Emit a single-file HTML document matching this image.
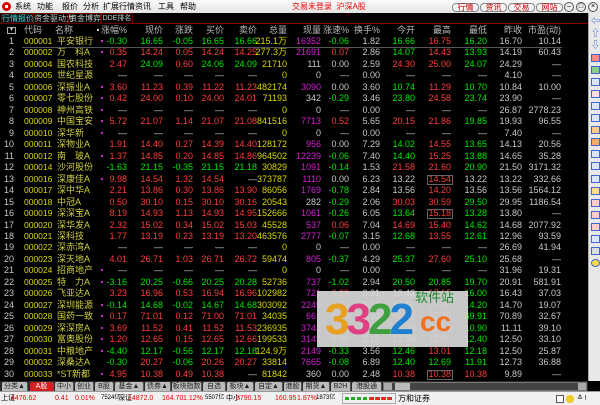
<!DOCTYPE html>
<html><head><meta charset="utf-8">
<style>
*{margin:0;padding:0;box-sizing:border-box}
body{width:600px;height:405px;overflow:hidden;background:#000;font-family:"Liberation Sans","Noto Sans CJK SC",sans-serif;font-size:9px;position:relative}
.a{position:absolute;white-space:nowrap}
#menu{left:0;top:0;width:600px;height:13px;background:linear-gradient(#fafafa,#e4e4e4);color:#000}
#tabs{left:0;top:13px;width:588px;height:11px;background:#000;border-bottom:1px solid #800}
.tb{position:absolute;top:0;height:11px;border:1px solid #600;color:#ccc;font-size:8px;line-height:9px;text-align:center}
.btn{position:absolute;top:3px;height:9px;border:1px solid #888;border-radius:4px;background:#f4f4f4;color:#c00;font-size:8px;line-height:7px;text-align:center}
.circ{position:absolute;top:2px;width:10px;height:10px;border:1px solid #555;border-radius:50%;background:#eee;font-size:7px;line-height:8px;text-align:center;color:#000}
#side{left:588px;top:13px;width:12px;height:368px;background:#e8e8e8;border-left:1px solid #aaa}
.ic{position:absolute;left:2px;width:9px;height:8px;border:1px solid #4466cc;background:#dde6ff}
.c{position:absolute;line-height:11px;height:11px;white-space:nowrap}
.r{text-align:right}
#btab{left:0;top:381px;width:588px;height:10px;background:#2a2a2a}
.bt{position:absolute;top:1px;height:9px;background:#bbb;color:#222;font-size:7px;line-height:9px;text-align:center;border-right:1px solid #555;border-radius:2px 2px 0 0;overflow:hidden}
#status{left:0;top:391px;width:600px;height:14px;background:#f0f0f0;border-top:1px solid #999;font-size:7px;line-height:13px;color:#000}
#status .a{top:0}
.rd{color:#e00}
</style></head><body>
<div id="menu" class="a">
 <div class="a" style="left:2px;top:2px;width:9px;height:9px;border-radius:50%;background:#d00"></div>
 <div class="a" style="left:5px;top:5px;width:3px;height:3px;background:#fff"></div>
 <span class="a" style="left:15px;top:1px;font-size:8px">系统</span>
 <span class="a" style="left:37px;top:1px;font-size:8px">功能</span>
 <span class="a" style="left:62px;top:1px;font-size:8px">报价</span>
 <span class="a" style="left:83px;top:1px;font-size:8px">分析</span>
 <span class="a" style="left:103px;top:1px;font-size:8px">扩展行情</span>
 <span class="a" style="left:135px;top:1px;font-size:8px">资讯</span>
 <span class="a" style="left:158px;top:1px;font-size:8px">工具</span>
 <span class="a" style="left:180px;top:1px;font-size:8px">帮助</span>
 <span class="a" style="left:292px;top:1px;font-size:8px;color:#e00">交易未登录&nbsp;&nbsp;沪深A股</span>
 <div class="btn" style="left:452px;width:27px">行情</div>
 <div class="btn" style="left:480px;width:27px">资讯</div>
 <div class="btn" style="left:508px;width:27px">交易</div>
 <div class="btn" style="left:536px;width:27px">网站</div>
 <div class="circ" style="left:564px">–</div>
 <div class="circ" style="left:576px">□</div>
 <div class="circ" style="left:588px">×</div>
</div>
<div id="tabs" class="a">
 <div class="tb" style="left:1px;width:32px;color:#3cc;background:#111">行情报价</div>
 <div class="tb" style="left:33px;width:35px">资金驱动力</div>
 <div class="tb" style="left:68px;width:33px">资金博弈</div>
 <div class="tb" style="left:101px;width:32px;font-size:7px">DDE排名</div>
</div>
<div id="side" class="a">
 <div class="ic" style="top:4px;border:none;background:none;color:#36c;font-size:9px;line-height:8px">⇦</div>
 <div class="ic" style="top:16px;border:none;background:none;color:#36c;font-size:9px;line-height:8px">⇧</div>
 <div class="ic" style="top:28px;border:none;background:none;color:#36c;font-size:9px;line-height:8px">⇩</div>
 <div class="ic" style="top:41px;background:#f88"></div>
 <div class="ic" style="top:53px;background:#8c8"></div>
 <div class="ic" style="top:65px"></div>
 <div class="ic" style="top:77px;background:#fdd"></div>
 <div class="ic" style="top:89px"></div>
 <div class="ic" style="top:101px"></div>
 <div class="ic" style="top:113px;background:#fc8"></div>
 <div class="ic" style="top:125px;background:#fa6"></div>
 <div class="ic" style="top:137px"></div>
 <div class="ic" style="top:149px"></div>
 <div class="ic" style="top:162px"></div>
 <div class="ic" style="top:174px;background:#fd8"></div>
 <div class="ic" style="top:186px;background:#fcc"></div>
 <div class="ic" style="top:198px;background:#fcc"></div>
 <div class="ic" style="top:210px;background:#fcc"></div>
 <div class="ic" style="top:222px"></div>
 <div class="ic" style="top:234px;background:#ddd"></div>
 <div class="ic" style="top:246px;background:#fd4;border-radius:50%"></div>
</div>
<div id="grid"></div>
<div class="a" style="left:317px;top:291px;width:151px;height:56px;background:rgba(215,215,215,0.93)">
 <span class="a" style="left:8px;top:6px;font-size:44px;line-height:46px;font-weight:bold;letter-spacing:-3px;color:#e8a020">3<span style="color:#e04080">3</span><span style="color:#40a040">2</span><span style="color:#2080d0">2</span></span>
 <span class="a" style="left:103px;top:16px;font-size:28px;font-weight:bold;color:#f07020;line-height:30px">cc</span>
 <span class="a" style="left:98px;top:-1px;font-size:13px;color:#1a8a2a;line-height:16px">软件站</span>
</div>
<div id="btab" class="a"></div>
<div id="status" class="a">
 <span class="a" style="left:1px">上证</span><span class="a rd" style="left:11px">4476.62</span>
 <span class="a rd" style="left:55px">0.41</span>
 <span class="a rd" style="left:75px">0.01%</span>
 <span class="a" style="left:101px;font-size:6px">7524亿</span>
 <span class="a" style="left:118px">深证</span><span class="a rd" style="left:128px">14872.0</span>
 <span class="a rd" style="left:162px">164.70</span>
 <span class="a rd" style="left:183px">1.12%</span>
 <span class="a" style="left:205px;font-size:6px">5507亿</span>
 <span class="a" style="left:226px">中小</span><span class="a rd" style="left:236px">8790.15</span>
 <span class="a rd" style="left:275px">160.95</span>
 <span class="a rd" style="left:297px">1.87%</span>
 <span class="a" style="left:316px;font-size:6px">1873亿</span>
 <div class="a" style="left:342px;top:1px;width:54px;height:11px;border:1px solid #aaa"></div>
 <div class="a" style="left:345px;top:5px;width:48px;height:3px;background:repeating-linear-gradient(90deg,#2a2 0 4px,transparent 4px 6px)"></div>
 <div class="a" style="left:370px;top:5px;width:22px;height:3px;background:repeating-linear-gradient(90deg,#e22 0 4px,transparent 4px 6px)"></div>
 <span class="a" style="left:398px;font-size:8px">万和证券</span>
 <div class="a" style="left:556px;top:3px;width:8px;height:8px;border:1px solid #555;background:#fff"></div>
 <div class="a" style="left:566px;top:3px;width:8px;height:8px;border-radius:50%;background:#ec2"></div>
 <span class="a" style="left:577px">≛ !</span>
</div>
<script>
var R='#ff3c3c',G='#00e800',W='#c8c8c8',Y='#d8d800',M='#d020d0',D='—';
var rows=[
["000001","平安银行",1,"-0.30","16.65","-0.05","16.65","16.66","215.1万","16352","-0.06","1.82","16.66","16.75","16.20","16.70","10.14"],
["000002","万　科A",1,"0.35","14.24","0.05","14.24","14.25","277.3万","21691","0.07","2.86","14.07","14.43","13.93","14.19","60.43"],
["000004","国农科技",0,"2.47","24.09","0.60","24.06","24.09","21710","111","0.00","2.59","24.30","25.00","24.07","24.29",D],
["000005","世纪星源",0,D,D,D,D,D,"0","0",D,"0.00",D,D,D,"4.10",D],
["000006","深振业A",1,"3.60","11.23","0.39","11.22","11.23","482174","3090","0.00","3.60","10.74","11.29","10.70","10.84","10.00"],
["000007","零七股份",1,"0.42","24.00","0.10","24.00","24.01","71193","342","-0.29","3.46","23.80","24.58","23.74","23.90",D],
["000008","神州高铁",1,D,D,D,D,D,"0","0",D,"0.00",D,D,D,"26.87","2778.23"],
["000009","中国宝安",1,"5.72","21.07","1.14","21.07","21.08","841516","7713","0.52","5.65","20.15","21.86","19.85","19.93","96.55"],
["000010","深华新",1,D,D,D,D,D,"0","0",D,"0.00",D,D,D,"7.40",D],
["000011","深物业A",0,"1.91","14.40","0.27","14.39","14.40","128172","956","0.00","7.29","14.02","14.55","13.65","14.13","20.56"],
["000012","南　玻A",1,"1.37","14.85","0.20","14.85","14.86","964502","12239","-0.06","7.40","14.40","15.25","13.88","14.65","35.28"],
["000014","沙河股份",0,"-1.63","21.15","-0.35","21.15","21.18","30829","1091","-0.14","1.53","21.58","21.60","20.90","21.50","3171.32"],
["000016","深康佳A",1,"9.98","14.54","1.32","14.54",D,"373787","1110","0.00","6.23","13.22","14.54","13.22","13.22","332.66",1],
["000017","深中华A",0,"2.21","13.86","0.30","13.86","13.90","86056","1769","-0.78","2.84","13.56","14.20","13.56","13.56","1564.12"],
["000018","中冠A",0,"0.50","30.10","0.15","30.10","30.16","20543","282","-0.29","2.06","30.03","30.59","29.50","29.95","1186.54"],
["000019","深深宝A",0,"8.19","14.93","1.13","14.93","14.95","152666","1061","-0.26","6.05","13.64","15.18","13.28","13.80",D,1],
["000020","深华发A",0,"2.32","15.02","0.34","15.02","15.03","45528","537","0.06","7.04","14.69","15.40","14.62","14.68","2077.92"],
["000021","深科技",0,"1.77","13.19","0.23","13.19","13.20","463576","2777","-0.07","3.15","12.68","13.55","12.61","12.96","93.59"],
["000022","深赤湾A",0,D,D,D,D,D,"0","0",D,"0.00",D,D,D,"26.69","41.94"],
["000023","深天地A",0,"4.01","26.71","1.03","26.71","26.72","59474","805","-0.37","4.29","25.37","27.60","25.10","25.68",D],
["000024","招商地产",1,D,D,D,D,D,"0","0",D,"0.00",D,D,D,"31.96","19.31"],
["000025","特　力A",1,"-3.16","20.25","-0.66","20.25","20.28","52736","737","-1.02","2.94","20.50","20.85","19.70","20.91","581.91"],
["000026","飞亚达A",0,"3.23","16.96","0.53","16.94","16.96","102982","721","0.29","3.31","16.43","17.18","16.00","16.43","37.03"],
["000027","深圳能源",1,"-0.14","14.68","-0.02","14.67","14.68","303092","2249","0.10","3.16","14.56","14.80","14.20","14.70","19.07"],
["000028","国药一致",1,"0.17","71.01","0.12","71.00","71.01","34035","661","0.05","3.20","70.90","72.39","69.91","70.89","32.67"],
["000029","深深房A",1,"3.69","11.52","0.41","11.52","11.53","236935","3743","0.09","2.66","11.20","11.60","10.90","11.11","39.10"],
["000030","富奥股份",1,"1.20","12.65","0.15","12.65","12.66","199533","3143","0.00","2.10","12.50","12.90","12.40","12.50","33.10"],
["000031","中粮地产",1,"-4.40","12.17","-0.56","12.17","12.18","124.9万","2149","-0.33","3.56","12.46","13.01","12.18","12.50","25.87"],
["000032","深桑达A",0,"-0.30","20.27","-0.06","20.26","20.27","33814","7665","-0.08","6.89","12.40","12.69","11.91","12.73","36.88"],
["000033","*ST新都",1,"4.95","10.38","0.49","10.38",D,"81842","360","0.00","2.48","10.38","10.38","10.38","9.89",D,1]
];
var h='';
function cell(x,y,t,col,right,w){w=w||50;h+='<div class="c'+(right?' r':'')+'" style="left:'+(right?x-w:x)+'px;top:'+y+'px;width:'+w+'px;color:'+col+'">'+t+'</div>';}
function sc(s){if(s==D)return W;var v=parseFloat(s);return v>0?R:(v<0?G:W);}
function pc(s,ref){if(s==D)return W;var v=parseFloat(s),r=parseFloat(ref);return v>r?R:(v<r?G:W);}
var hy=25;
h+='<div class="a" style="left:7px;top:27px;width:9px;height:7px;border:1px solid #aaa;font-size:6px;line-height:5px;color:#ccc;text-align:center">▾</div>';
var hd=[[24,"代码",0],[55,"名称",0],[127,"涨幅%",1],[163,"现价",1],[193,"涨跌",1],[224,"买价",1],[257,"卖价",1],[287,"总量",1],[321,"现量",1],[349,"涨速%",1],[380,"换手%",1],[415,"今开",1],[451,"最高",1],[487,"最低",1],[522,"昨收",1],[561,"市盈(动)",1]];
hd.forEach(function(c){cell(c[0],hy,c[1],'#bbb',c[2]);});
h+='<div class="a" style="left:97px;top:29px;width:2px;height:2px;background:#ccc"></div>';
var rx=[127,163,193,224,257,287,321,349,380,415,451,487,522,561];
rows.forEach(function(r,i){
 var y=Math.round(36+i*11.47);
 cell(14,y,String(i+1),W,1,14);
 h+='<div class="c" style="left:24px;top:'+y+'px;color:'+Y+';font-size:8.5px">'+r[0]+'</div>';
 cell(57,y,r[1],'#d0d040',0,45);
 if(r[2])h+='<div class="a" style="left:101px;top:'+(y+4)+'px;width:2px;height:2px;background:'+M+'"></div>';
 var ref=r[15];
 var cols=[sc(r[3]),pc(r[4],ref),sc(r[5]),pc(r[6],ref),pc(r[7],ref),Y,(r[9]=="0"||r[9]=="111"||r[9]=="342"||r[9]=="282"||r[9]=="237"||r[9]=="360")?W:M,sc(r[10]),W,pc(r[12],ref),pc(r[13],ref),pc(r[14],ref),W,W];
 for(var k=0;k<14;k++){cell(rx[k],y,r[k+3],cols[k],1);}
 if(r[17])h+='<div class="a" style="left:427px;top:'+(y+1)+'px;width:26px;height:10px;border:1px solid #666"></div>';
});
h+='<div class="a" style="left:22px;top:47px;width:540px;height:1px;background:#555"></div>';
document.getElementById('grid').innerHTML=h;
var bt=[[2,26,"分类▲"],[30,24,"A股"],[55,19,"中小"],[75,19,"创业"],[95,19,"B股"],[115,29,"基金▲"],[145,26,"债券▲"],[172,30,"板块指数"],[203,23,"自选"],[227,27,"板块▲"],[255,28,"自定▲"],[284,18,"港股"],[303,27,"期货▲"],[331,20,"B2H"],[352,30,"港股通"]];
var b='';
bt.forEach(function(t){b+='<div class="bt" style="left:'+t[0]+'px;width:'+t[1]+'px;'+(t[2]=="A股"?'background:#d02020;color:#fff':'')+'">'+t[2]+'</div>';});
b+='<div class="a" style="left:383px;top:1px;width:204px;height:9px;background:#444;border:1px solid #777"></div><div class="a" style="left:384px;top:2px;width:8px;height:7px;background:#aaa"></div><div class="a" style="left:395px;top:2px;width:15px;height:7px;background:#bbb"></div><div class="a" style="left:578px;top:2px;width:8px;height:7px;background:#aaa"></div>';
document.getElementById('btab').innerHTML=b;
</script>
</body></html>
